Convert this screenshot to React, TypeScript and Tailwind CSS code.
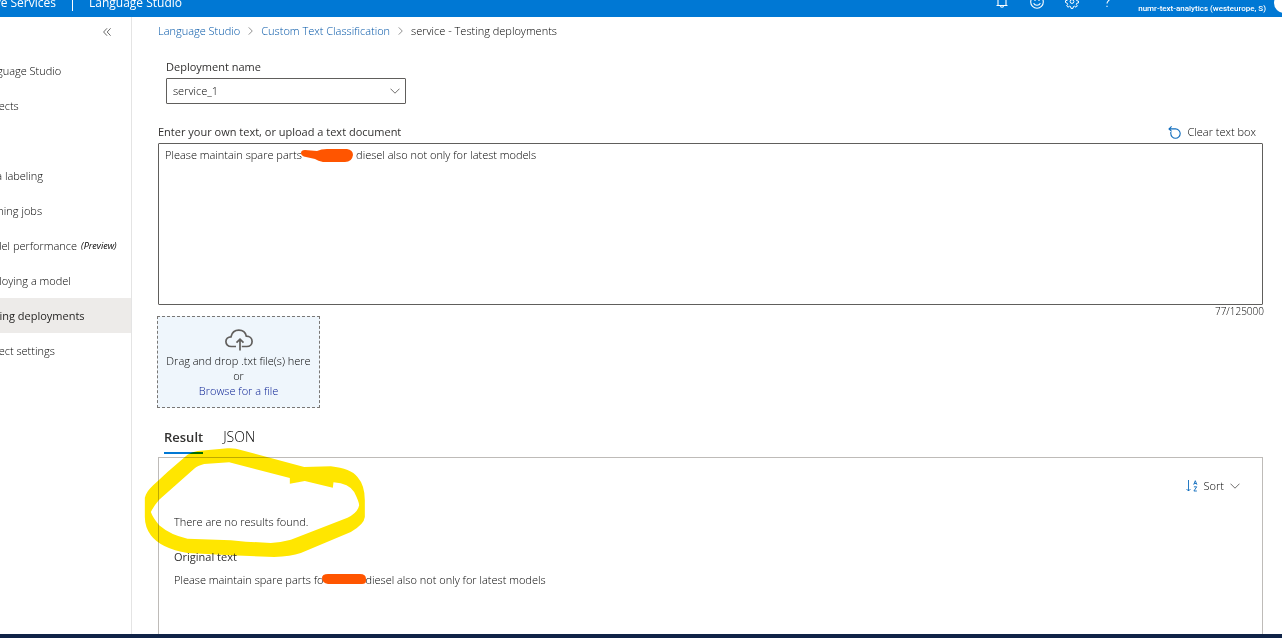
import { useState } from "react";

const NAV_TOP = ["Language Studio", "Projects"];
const NAV_PROJECT = [
  { label: "Data labeling" },
  { label: "Training jobs" },
  { label: "Model performance", note: "(Preview)" },
  { label: "Deploying a model" },
  { label: "Testing deployments", active: true },
  { label: "Project settings" },
];

function Chevron({ className }: { className?: string }) {
  return (
    <svg viewBox="0 0 10 6" className={className} fill="none" stroke="currentColor" strokeWidth="0.9" aria-hidden="true">
      <path d="M0.5 0.7 5 5.2 9.5 0.7" />
    </svg>
  );
}

function BreadcrumbArrow() {
  return (
    <svg viewBox="0 0 6 10" className="mx-2 h-2 w-[5px] text-[#767676]" fill="none" stroke="currentColor" strokeWidth="1" aria-hidden="true">
      <path d="M0.8 0.5 5.2 5 0.8 9.5" />
    </svg>
  );
}

function Header() {
  return (
    <header className="flex h-[17px] items-end overflow-hidden bg-[#0078d4] text-white">
      <div className="-ml-[56px] flex h-[29px] shrink-0 items-center text-[12px] font-medium">
        <span className="w-[112px] text-right">Cognitive Services</span>
        <span className="ml-4 h-4 w-px bg-white" />
        <a href="#studio" className="ml-4">Language Studio</a>
      </div>
      <div className="ml-auto flex h-[30px] shrink-0 items-center">
        <button type="button" aria-label="Notifications" className="w-[35px]">
          <svg viewBox="0 0 14 14" className="mx-auto h-3.5 w-3.5" fill="none" stroke="white" strokeWidth="1.1">
            <path d="M3 10.500V5a4 4 0 0 1 8 0v5.500M1.500 10.500h11M5.500 10.800a1.500 1.500 0 0 0 3 0" />
          </svg>
        </button>
        <button type="button" aria-label="Feedback" className="w-[35px]">
          <svg viewBox="0 0 14 14" className="mx-auto h-3.5 w-3.5" fill="none" stroke="white" strokeWidth="1.1">
            <circle cx="7" cy="7" r="6.300" />
            <path d="M3.600 8.200c1.400 2.700 5.400 2.700 6.800 0M5 5v1M9 5v1" />
          </svg>
        </button>
        <button type="button" aria-label="Settings" className="w-[35px]">
          <svg viewBox="0 0 14 14" className="mx-auto h-3.5 w-3.5" fill="none" stroke="white" strokeWidth="1">
            <circle cx="7" cy="6.5" r="1.9" />
            <path d="M6 .6h2l.4 1.8 1 .4 1.6-1 1.3 1.4-1 1.5.4 1 1.8.4v1.8l-1.8.4-.4 1 1 1.6-1.3 1.3-1.6-1-1 .4-.4 1.8H6l-.4-1.8-1-.4-1.6 1-1.3-1.3 1-1.6-.4-1L.5 7.5V5.700l1.800-.4.4-1-1-1.500L3 1.400l1.600 1 1-.4z" />
          </svg>
        </button>
        <button type="button" aria-label="Help" className="w-[35px]">
          <svg viewBox="0 0 14 14" className="mx-auto h-3.5 w-3.5" fill="none" stroke="white" strokeWidth="1.1">
            <path d="M4.500 3.500c0-3.600 5.300-3.600 5.300 0C9.800 5.600 7 5.800 7 8.600M7 10.700v1.400" />
          </svg>
        </button>
        <div className="ml-3.5 self-end font-['Roboto',sans-serif] text-[8px] font-medium leading-4">numr-text-analytics (westeurope, S)</div>
        <div className="-mr-3 ml-2 mb-1 h-5 w-5 self-end rounded-full bg-white" />
      </div>
    </header>
  );
}

function Sidebar() {
  return (
    <aside className="w-[132px] shrink-0 overflow-hidden border-r border-[#e4e4e4]">
      <div className="flex h-9 items-start justify-end pr-5 pt-[11px]">
        <button type="button" aria-label="Collapse navigation" className="flex">
          <svg viewBox="0 0 8 8" className="h-2 w-2" fill="none" stroke="#444" strokeWidth="0.8">
            <path d="M4 .3.6 4 4 7.700M7.600.3 4.200 4l3.400 3.700" />
          </svg>
        </button>
      </div>
      <nav>
        {NAV_TOP.map((label) => (
          <a key={label} href="#nav" className="flex h-[35px] items-center whitespace-nowrap">
            <span className="-ml-[21px]">{label}</span>
          </a>
        ))}
        <div className="h-[35px]" />
        {NAV_PROJECT.map(({ label, note, active }) => (
          <a
            key={label}
            href="#nav"
            className={
              active
                ? "flex h-[35px] items-center whitespace-nowrap bg-[#edebe9] font-medium text-[#201f1e]"
                : "flex h-[35px] items-center whitespace-nowrap"
            }
          >
            <span className={active ? "-ml-[22px]" : "-ml-[21px]"}>{label}</span>
            {note && <em className="ml-1 text-[9px] font-normal">{note}</em>}
          </a>
        ))}
      </nav>
    </aside>
  );
}

function HighlighterLoop() {
  return (
    <svg viewBox="40 80 665 333" className="pointer-events-none absolute -left-[15px] -top-[11px] h-[111px] w-[222px] mix-blend-multiply" aria-hidden="true">
      <path
        fill="#ffe600"
        fillRule="evenodd"
        d="M42 250V232C48 205 80 185 110 155L170 103Q182 95 200 92L290 84Q315 83 330 89L520 140L600 138Q660 145 680 170Q702 195 702 240V290Q700 312 660 335L510 398Q480 408 430 410L300 405L170 398Q90 385 60 345Q42 320 42 290ZM60 275Q70 255 85 238L190 145Q200 136 220 131L295 126L477 173V190L522 182L606 202L608 186Q655 190 670 215Q685 245 685 255Q680 278 650 292L480 358Q450 366 420 368L345 364L300 360L170 355Q120 345 85 315Q65 290 60 275Z"
      />
    </svg>
  );
}

export default function App() {
  const [text, setText] = useState(
    "Please maintain spare parts" + " ".repeat(19) + "diesel also not only for latest models",
  );
  return (
    <div className="flex min-h-screen flex-col bg-white font-['Open_Sans','Noto_Sans',sans-serif] text-[11px] font-light leading-4 text-black">
      <Header />
      <div className="flex flex-1">
        <Sidebar />
        <main className="flex min-w-0 flex-1 flex-col pl-[26px] pr-[19px]">
          <nav aria-label="Breadcrumb" className="mt-1.5 flex items-center">
            <a href="#studio" className="text-[#0054a6]">Language Studio</a>
            <BreadcrumbArrow />
            <a href="#classification" className="text-[#0054a6]">Custom Text Classification</a>
            <BreadcrumbArrow />
            <span>service - Testing deployments</span>
          </nav>

          <div className="ml-2 mt-5 w-60">
            <label htmlFor="deployment" className="block font-normal text-[#323130]">Deployment name</label>
            <div className="relative mt-[3px]">
              <select id="deployment" className="block h-[26px] w-full appearance-none rounded-[1px] border border-[#605e5c] bg-white pl-1.5 pr-6">
                <option>service_1</option>
              </select>
              <Chevron className="pointer-events-none absolute right-1.5 top-2.5 h-1.5 w-2.5 text-[#605e5c]" />
            </div>
          </div>

          <div className="mt-5 flex items-center justify-between">
            <label htmlFor="document" className="font-normal text-[#323130]">Enter your own text, or upload a text document</label>
            <button type="button" onClick={() => setText("")} className="mr-[7px] flex items-center gap-1.5">
              <svg viewBox="0 0 13 13" className="h-[13px] w-[13px]" fill="none" stroke="#0f6cbd" strokeWidth="1.1" aria-hidden="true">
                <path d="M3.600.4 1 2.900l2.600 2.500M1 2.900h6.500a4.700 4.700 0 1 1-4.700 4.700V6" />
              </svg>
              Clear text box
            </button>
          </div>
          <div className="relative mt-[3px]">
            <textarea
              id="document"
              value={text}
              onChange={(e) => setText(e.target.value)}
              className="block h-[162px] w-full resize-none rounded-[1px] border border-[#605e5c] px-1.5 py-[3px]"
            />
            <svg viewBox="0 0 52 14" className="pointer-events-none absolute left-[143px] top-1.5 h-3.5 w-[52px]" aria-hidden="true">
              <path fill="#ff5500" d="M0 4Q0 1 4 1L16 2Q20 0 26 0H46Q52 1 52 6Q51 13 44 13H22Q17 12 14 10L5 8Q0 7 0 4Z" />
            </svg>
          </div>
          <div className="-mr-px pt-0.5 text-right text-[10px] leading-[9px]">77/125000</div>

          <div className="-ml-px flex h-[92px] w-[163px] flex-col items-center border border-dashed border-[#797775] bg-[#eff6fc] pt-3 leading-[15px]">
            <svg viewBox="0 0 28 22" className="mb-0.5 h-[22px] w-7" fill="none" stroke="#605e5c" strokeWidth="1.700" aria-hidden="true">
              <path d="M11 17.500H6.200C3 17.500.9 15.400.9 12.600S3.200 7.800 6 7.800C7 3.600 10 1.200 13.800 1.200c4 0 6.800 2.600 7.500 6 3.400 0 5.800 2.200 5.800 5.200 0 3-2.300 5.100-5.300 5.100h-5M15 21.500V10.500M11.500 13.700 15 10.200l3.500 3.500" />
            </svg>
            <span>Drag and drop .txt file(s) here</span>
            <span>or</span>
            <button type="button" className="text-[#00188f]">Browse for a file</button>
          </div>

          <div role="tablist" className="mt-5 flex h-[26px] gap-5 pl-1.5 text-[13px] leading-[18px]">
            <button type="button" role="tab" aria-selected="true" className="flex items-start border-b-2 border-[#0078d4] font-semibold text-[#323130]">Result</button>
            <button type="button" role="tab" aria-selected="false" className="flex items-start text-sm leading-[18px]">JSON</button>
          </div>
          <section className="relative mt-[3px] flex-1 border border-b-0 border-[#bebbb8] px-[15px] pt-5">
            <div className="flex justify-end pr-[7px]">
              <button type="button" className="flex items-center">
                <svg viewBox="0 0 12 12" className="h-3 w-3" fill="none" stroke="#0f6cbd" strokeWidth="0.9" aria-hidden="true">
                  <path d="M2.500 0V11M.5 9l2 2 2-2M7.700 4.700 9.300.7l1.600 4M8.200 3.500h2.200M7.900 6.800h2.800L7.900 11h3" />
                </svg>
                <span className="ml-1.5">Sort</span>
                <Chevron className="ml-1.5 h-1.5 w-2.5 text-[#605e5c]" />
              </button>
            </div>
            <p className="mt-5">There are no results found.</p>
            <h2 className="mt-[19px] font-normal text-[#323130]">Original text</h2>
            <p className="mt-[7px] flex">
              <span>Please maintain spare parts fo</span>
              <svg viewBox="0 0 44 10" className="-mx-px mt-0.5 h-2.5 w-11" aria-hidden="true">
                <path fill="#ff5500" d="M0 4Q0 0 6 0H38Q44 0 44 5V7Q44 10 40 10H6Q0 9 0 4Z" />
              </svg>
              <span>diesel also not only for latest models</span>
            </p>
            <HighlighterLoop />
          </section>
        </main>
      </div>
      <footer className="h-1 bg-[#0f2347]" />
    </div>
  );
}
